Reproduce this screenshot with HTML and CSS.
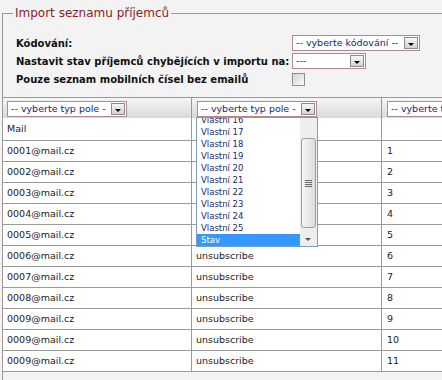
FILE: index.html
```html
<!DOCTYPE html>
<html lang="cs">
<head>
    <meta charset="UTF-8">
    <meta name="viewport" content="width=device-width, initial-scale=1.0">
    <title>Import seznamu příjemců</title>
    <link rel="stylesheet" href="styles.css">
</head>
<body>
    <fieldset class="import">
        <legend>Import seznamu příjemců</legend>

        <div class="options">
            <label>Kódování:</label>
            <div class="select select-wide"><span class="value">-- vyberte kódování --</span><span class="arrow"></span></div>

            <label>Nastavit stav příjemců chybějících v importu na:</label>
            <div class="select select-short"><span class="value">---</span><span class="arrow"></span></div>

            <label>Pouze seznam mobilních čísel bez emailů</label>
            <span class="checkbox"></span>
        </div>

        <div class="grid">
            <div class="cell head">
                <div class="select"><span class="value">-- vyberte typ pole -</span><span class="arrow"></span></div>
            </div>
            <div class="cell head">
                <div class="select"><span class="value">-- vyberte typ pole -</span><span class="arrow"></span></div>
                <!-- open dropdown of the second column -->
                <div class="dropdown">
                    <div class="items">
                        <div class="item">Vlastní 16</div>
                        <div class="item">Vlastní 17</div>
                        <div class="item">Vlastní 18</div>
                        <div class="item">Vlastní 19</div>
                        <div class="item">Vlastní 20</div>
                        <div class="item">Vlastní 21</div>
                        <div class="item">Vlastní 22</div>
                        <div class="item">Vlastní 23</div>
                        <div class="item">Vlastní 24</div>
                        <div class="item">Vlastní 25</div>
                        <div class="item active">Stav</div>
                    </div>
                    <div class="scrollbar">
                        <span class="thumb"><span class="grip"></span></span>
                        <span class="down"></span>
                    </div>
                </div>
            </div>
            <div class="cell head">
                <div class="select"><span class="value">-- vyberte typ pole -</span><span class="arrow"></span></div>
            </div>

            <!-- second column of the first rows sits under the open dropdown -->
            <div class="cell tall">Mail</div><div class="cell tall"></div><div class="cell tall"></div>

            <div class="cell">0001@mail.cz</div><div class="cell"></div><div class="cell">1</div>
            <div class="cell">0002@mail.cz</div><div class="cell"></div><div class="cell">2</div>
            <div class="cell">0003@mail.cz</div><div class="cell"></div><div class="cell">3</div>
            <div class="cell">0004@mail.cz</div><div class="cell"></div><div class="cell">4</div>
            <div class="cell">0005@mail.cz</div><div class="cell"></div><div class="cell">5</div>
            <div class="cell">0006@mail.cz</div><div class="cell">unsubscribe</div><div class="cell">6</div>
            <div class="cell">0007@mail.cz</div><div class="cell">unsubscribe</div><div class="cell">7</div>
            <div class="cell">0008@mail.cz</div><div class="cell">unsubscribe</div><div class="cell">8</div>
            <div class="cell">0009@mail.cz</div><div class="cell">unsubscribe</div><div class="cell">9</div>
            <div class="cell">0009@mail.cz</div><div class="cell">unsubscribe</div><div class="cell">10</div>
            <div class="cell">0009@mail.cz</div><div class="cell">unsubscribe</div><div class="cell">11</div>
        </div>
    </fieldset>
</body>
</html>
```

FILE: styles.css
```css
html,
body {
    overflow: hidden;
}

body {
    margin: 0;
    padding-top: 5px;
    background-color: #f3f3f3;
    font-family: "DejaVu Sans", Verdana, sans-serif;
    color: #1b1b1b;
}

.import {
    margin: 0 0 0 2px;
    padding: 0 0 40px;
    border: 1px solid #9a9a9a;
}

.import legend {
    margin-left: 10px;
    padding: 0 2px;
    font-size: 12px;
    line-height: 16px;
    color: #8e1b27;
}

.options {
    display: grid;
    grid-template-columns: 276px auto;
    grid-auto-rows: 16px;
    row-gap: 2px;
    align-items: center;
    justify-items: start;
    margin: 14px 0 10px 13px;
}

.options label {
    font-size: 10px;
    font-weight: bold;
    color: #111;
    white-space: nowrap;
}

/* fake windows-style select */
.select {
    display: flex;
    width: 120px;
    height: 16px;
    box-sizing: border-box;
    border: 1px solid #b38a8a;
    background-color: #fff;
}

.select-wide {
    width: 128px;
}

.select-short {
    width: 74px;
}

.select .value {
    flex: 1;
    padding-left: 3px;
    font-size: 9.5px;
    line-height: 14px;
    color: #17286a;
    white-space: nowrap;
    overflow: hidden;
}

.select .arrow {
    position: relative;
    flex: none;
    width: 14px;
    height: 12px;
    margin: 1px;
    box-sizing: border-box;
    border: 1px solid #8c8c8c;
    background: linear-gradient(#f7f7f7, #d2d2d2);
}

.select .arrow::after {
    content: "";
    position: absolute;
    left: 50%;
    bottom: 2px;
    margin-left: -3.5px;
    border-left: 3.5px solid transparent;
    border-right: 3.5px solid transparent;
    border-top: 3px solid #000;
}

.checkbox {
    width: 13px;
    height: 13px;
    box-sizing: border-box;
    border: 1px solid #8f8f8f;
    background: linear-gradient(135deg, #d6d6d6, #f8f8f8);
}

.grid {
    display: grid;
    grid-template-columns: 189px 190px 190px;
    border-top: 1px solid #9a9a9a;
}

.cell {
    height: 21px;
    box-sizing: border-box;
    padding-left: 4px;
    border-right: 1px solid #9a9a9a;
    border-bottom: 1px solid #9a9a9a;
    background-color: #fff;
    font-size: 9.5px;
    line-height: 20px;
    white-space: nowrap;
    overflow: hidden;
}

.cell:nth-child(3n) {
    padding-left: 5px;
}

.cell.head {
    position: relative;
    height: 20px;
    padding-top: 3px;
    border-bottom: none;
    background: linear-gradient(#f6f6f6, #d8d8d8);
    overflow: visible;
}

.cell.head:nth-child(2) {
    padding-left: 5px;
}

.cell.tall {
    height: 23px;
    line-height: 22px;
}

.dropdown {
    position: absolute;
    top: 19px;
    left: 4px;
    z-index: 1;
    display: flex;
    width: 122px;
    height: 130px;
    box-sizing: border-box;
    border: 1px solid #7f9db9;
    background-color: #fff;
}

.dropdown .items {
    flex: 1;
    overflow: hidden;
}

.dropdown .item {
    height: 12px;
    padding-left: 4px;
    font-size: 8.5px;
    line-height: 12px;
    color: #17286a;
}

.dropdown .item:first-child {
    margin-top: -4px;
}

.dropdown .item.active {
    background-color: #3399ff;
    color: #fff;
}

.scrollbar {
    position: relative;
    flex: none;
    width: 17px;
    background-color: #eeeeee;
}

.scrollbar .thumb {
    position: absolute;
    top: 20px;
    left: 1px;
    width: 15px;
    height: 90px;
    box-sizing: border-box;
    border: 1px solid #9b9b9b;
    border-radius: 3px;
    background: linear-gradient(to right, #f6f6f6, #dcdcdc);
}

.scrollbar .grip {
    position: absolute;
    top: 41px;
    left: 3px;
    width: 7px;
    height: 7px;
    background: repeating-linear-gradient(#666 0 1px, transparent 1px 2px);
}

.scrollbar .down {
    position: absolute;
    bottom: 5px;
    left: 5px;
    border-left: 3.5px solid transparent;
    border-right: 3.5px solid transparent;
    border-top: 3px solid #555;
}
```
